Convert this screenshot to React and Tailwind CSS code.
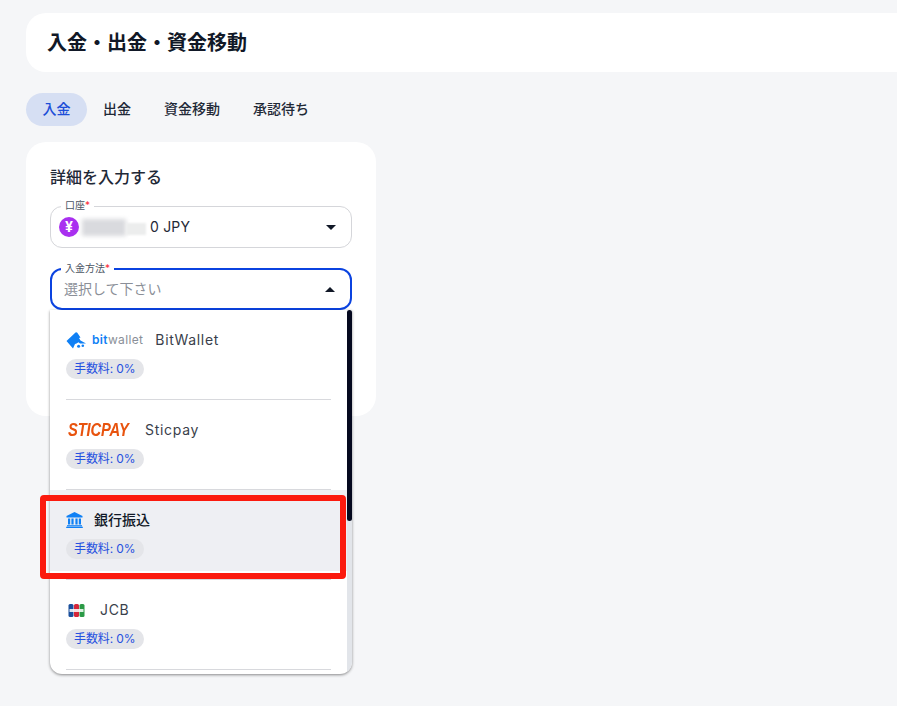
import React from "react";

const FONT = "[font-family:Inter,'Noto_Sans_CJK_JP',sans-serif]";

const BankIcon = () => (
    <svg width="17" height="16" viewBox="0 0 17 16" fill="#0f80f5">
        <path d="M8.5 0 L16.5 4 V5.5 H0.5 V4 Z" />
        <rect x="2" y="6.5" width="2.2" height="6" />
        <rect x="5.4" y="6.5" width="2.2" height="6" />
        <rect x="9.4" y="6.5" width="2.2" height="6" />
        <rect x="12.8" y="6.5" width="2.2" height="6" />
        <rect x="1" y="13.2" width="15" height="1.2" />
        <rect x="0.2" y="14.7" width="16.6" height="1.3" />
    </svg>
);

const JcbIcon = () => (
    <svg width="17" height="15" viewBox="0 0 17 15">
        <rect x="0.5" y="1" width="5" height="13" rx="1.5" fill="#1a4f9c" />
        <rect x="6" y="1" width="5" height="13" rx="1.5" fill="#d5263a" />
        <rect x="11.5" y="1" width="5" height="13" rx="1.5" fill="#2b9a46" />
        <rect x="1.5" y="6" width="14" height="3" fill="#ffffff" opacity="0.85" />
    </svg>
);

const BitwalletLogo = () => (
    <div className="flex items-center gap-[6px]">
        <svg width="20" height="17" viewBox="0 0 20 17" fill="#0f80f5">
            <path d="M0.5 9 L9.5 0.5 Q10.5 -0.2 11.3 0.8 L14.5 5.5 L13 6 L14.5 8.5 L20 11.5 L14 11.5 L12.5 10.2 L10.5 11.5 L9 12 L7 16.5 Z" />
            <circle cx="12.6" cy="14.2" r="1.5" />
            <circle cx="16.8" cy="13.8" r="1.3" />
        </svg>
        <span className="text-[12px] leading-none tracking-[0.35px] text-[#8a8f98]">
            <span className="font-semibold text-[#0f80f5]">bit</span>wallet
        </span>
    </div>
);

const SticpayLogo = () => (
    <span className="ml-[2px] w-[62px] origin-left scale-x-[0.82] text-[18px] leading-none font-extrabold whitespace-nowrap italic tracking-[-0.2px] text-[#e8530e] [font-family:'Liberation_Sans',sans-serif]">
        STICPAY
    </span>
);

const methods = [
    { name: "BitWallet", logo: <BitwalletLogo />, gap: "gap-3" },
    { name: "Sticpay", logo: <SticpayLogo />, gap: "gap-[15px]" },
    { name: "銀行振込", logo: <BankIcon />, gap: "gap-[11px]", active: true },
    { name: "JCB", logo: <div className="ml-[2px]"><JcbIcon /></div>, gap: "gap-[15px]" },
];

const MethodItem = ({ method }) => (
    <div className="h-[90px]">
        <div className={`h-[81px] px-4 pt-5 ${method.active ? "bg-[#eeeff3]" : "bg-white"}`}>
            <div className={`flex h-5 items-center ${method.gap}`}>
                {method.logo}
                <span className={`text-sm ${method.active ? "font-medium text-[#111827]" : "tracking-[0.7px] text-[#3a3f4b]"}`}>
                    {method.name}
                </span>
            </div>
            <span className="mt-[9px] inline-flex h-5 items-center rounded-full bg-[#e4e5e9] px-2 text-xs tracking-[-0.1px] text-[#2450e0]">
                手数料: 0%
            </span>
        </div>
        <div className="mx-4 mt-2 h-px bg-[#d8d9dd]" />
    </div>
);

const Field = ({ label, focused, children, arrowUp }) => (
    <div className={`relative flex h-[42px] items-center justify-between rounded-xl bg-white pr-[15px] ${focused ? "border-2 border-[#0b43e0] pl-[12px]" : "border border-[#d5d6da] pl-2"}`}>
        <span className={`absolute -top-[9px] bg-white px-1 text-[10px] leading-[14px] text-[#4b5563] ${focused ? "left-[9px]" : "left-[10px]"}`}>
            {label}
            <span className="text-red-500">*</span>
        </span>
        {children}
        <span className={`h-0 w-0 border-x-[5px] border-x-transparent ${arrowUp ? "border-b-[5px] border-b-[#111827]" : "border-t-[5px] border-t-[#111827]"}`} />
    </div>
);

const App = () => {
    return (
        <div className={`relative h-[706px] w-[897px] overflow-hidden bg-[#f5f6f8] pt-[13px] pl-[26px] ${FONT}`}>
            {/* Header */}
            <div className="flex h-[59px] w-[900px] items-center rounded-[20px] bg-white pl-[21px]">
                <h1 className="text-xl font-bold text-[#111827]">入金・出金・資金移動</h1>
            </div>

            {/* Tabs */}
            <div className="mt-[21px] flex h-[33px] items-center pb-px text-sm font-medium text-[#1f2937]">
                <div className="flex h-[33px] w-[61px] items-center justify-center rounded-full bg-[#d6dff3] text-[#1d4ed8]">入金</div>
                <div className="ml-4">出金</div>
                <div className="ml-[33px]">資金移動</div>
                <div className="ml-[33px]">承認待ち</div>
            </div>

            {/* Card */}
            <div className="relative mt-4 h-[274px] w-[350px] rounded-[20px] bg-white px-6 pt-[24px]">
                <h2 className="text-base leading-[22px] font-medium text-[#1f2937]">詳細を入力する</h2>
                <div className="mt-[18px] flex flex-col gap-5">
                    <Field label="口座">
                        <div className="flex items-center">
                            <span className="flex h-5 w-5 items-center justify-center rounded-full bg-[#a92ff0] text-sm font-bold text-white">¥</span>
                            <div className="ml-[3px] flex items-center">
                                <div className="h-[17px] w-[44px] bg-[#d9dade] blur-[2px]" />
                                <div className="mt-1 h-[12px] w-[20px] bg-[#eceded] blur-[1px]" />
                            </div>
                            <span className="ml-1 text-sm tracking-[0.2px] text-[#1f2937]">0 JPY</span>
                        </div>
                    </Field>
                    <Field label="入金方法" focused arrowUp>
                        <span className="text-sm text-[#8b8f98]">選択して下さい</span>
                    </Field>
                </div>

                {/* Dropdown */}
                <div className="absolute top-[168px] left-6 z-10 flex h-[364px] w-[302px] overflow-hidden rounded-b-xl bg-white shadow-[0_1px_3px_rgba(0,0,0,0.45)]">
                    <div className="w-[297px] shrink-0">
                        {methods.map((method) => (
                            <MethodItem key={method.name} method={method} />
                        ))}
                    </div>
                    <div className="h-full w-[5px] bg-[#e2e5ea]">
                        <div className="h-[211px] rounded-full bg-[#05091f]" />
                    </div>
                </div>
            </div>

            {/* Red annotation */}
            <div className="absolute top-[495px] left-[40px] z-20 h-[84px] w-[306px] rounded-[4px] border-[6px] border-[#fb1a0e]" />
        </div>
    );
};

export default App;
